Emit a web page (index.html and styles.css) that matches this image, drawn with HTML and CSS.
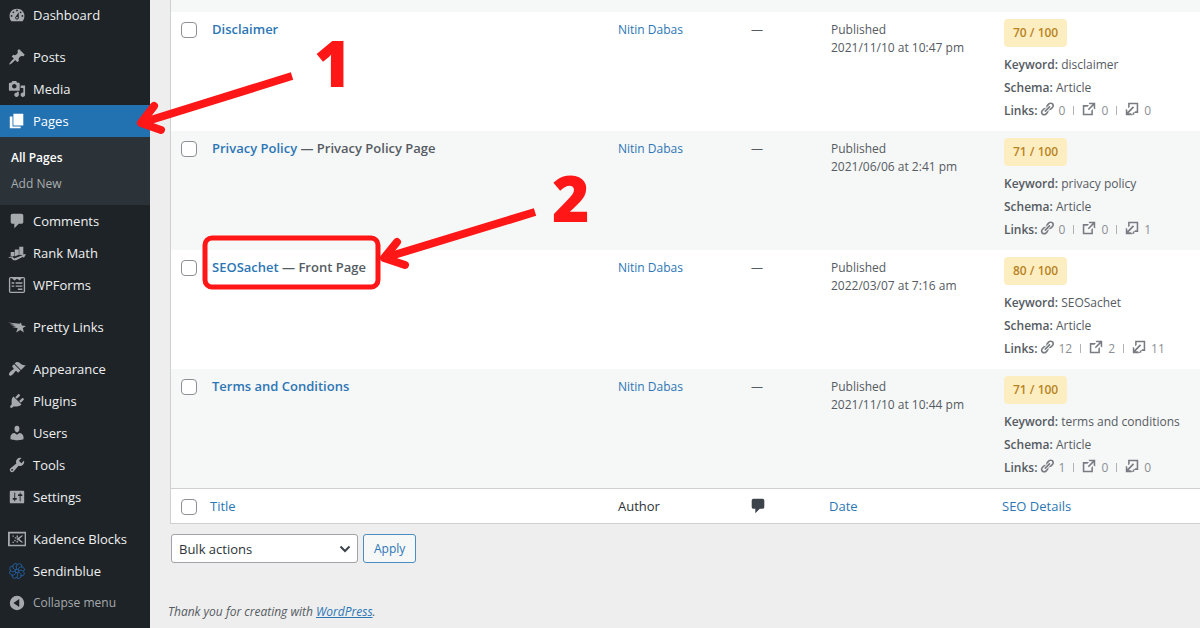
FILE: index.html
```html
<!DOCTYPE html>
<html lang="en">
<head>
<meta charset="utf-8">
<title>Pages</title>
<link rel="stylesheet" href="styles.css">
</head>
<body>
<svg class="sprite" aria-hidden="true">
  <symbol id="link" viewBox="1 1 18 18"><path d="M17.74 2.76c1.68 1.69 1.68 4.41 0 6.1l-1.53 1.52c-1.12 1.12-2.7 1.47-4.14 1.09l2.62-2.61.76-.77.76-.76c.84-.84.84-2.2 0-3.04-.84-.85-2.2-.85-3.04 0l-.77.76-3.38 3.38c-.37-1.44-.02-3.02 1.1-4.14l1.52-1.53c1.69-1.68 4.42-1.68 6.1 0zM8.59 13.43l5.34-5.34c.42-.42.42-1.1 0-1.52-.44-.43-1.13-.39-1.53 0l-5.33 5.34c-.42.42-.42 1.1 0 1.52.44.43 1.13.39 1.52 0zm-.76 2.29l4.14-4.15c.38 1.44.03 3.02-1.09 4.14l-1.52 1.53c-1.69 1.68-4.41 1.68-6.1 0-1.68-1.68-1.68-4.42 0-6.1l1.53-1.52c1.12-1.12 2.7-1.47 4.14-1.1l-4.14 4.15c-.85.84-.85 2.2 0 3.05.84.84 2.2.84 3.04 0z"/></symbol>
  <symbol id="external" viewBox="1 1 18 18"><path d="M9.500 2H18v8.500l-2-1V5.400l-6.200 6.200-1.400-1.400L14.600 4h-4zM13 16v-4l2-2v8H2V5h8L8 7H4v9z"/></symbol>
  <symbol id="incoming" viewBox="1 1 18 18"><path d="M5 2h13v13h-5.500l1.500-2h2V4H7v3.500L5 9zM2 10l2 1v2.800l7.200-7.200 1.500 1.500L5.600 15.500H9l1 2.500H2z"/><path d="M8.500 17.900L11 16v-1.500h2V17z"/></symbol>
  <symbol id="bubble" viewBox="0 0 20 20"><path d="M5 2h10c1.100 0 2 .9 2 2v7c0 1.100-.9 2-2 2h-3l-5 5v-5H5c-1.100 0-2-.9-2-2V4c0-1.100.9-2 2-2z"/></symbol>
</svg>
<div class="layout">
  <nav class="sidebar" aria-label="Main menu">
    <ul class="menu">
      <li><a href="#"><svg class="icon" viewBox="0 0 20 20"><path d="M3.760 17h12.480c1.340-1.630 2.010-3.820 2.010-6.030C18.260 6.020 14.550 3 10 3S1.740 6.020 1.740 11c0 2.210.68 4.370 2.020 6zM10 4c.55 0 1 .45 1 1s-.45 1-1 1-1-.45-1-1 .45-1 1-1zM6 6c.55 0 1 .45 1 1s-.45 1-1 1-1-.45-1-1 .45-1 1-1zM14 6c.55 0 1 .45 1 1s-.45 1-1 1-1-.45-1-1 .45-1 1-1zM8.630 11.550L12 7v6c0 1.100-.9 2-2 2s-2-.9-2-2c0-.57.24-1.080.63-1.450zM4 10c.55 0 1 .45 1 1s-.45 1-1 1-1-.45-1-1 .45-1 1-1zM16 10c.55 0 1 .45 1 1s-.45 1-1 1-1-.45-1-1 .45-1 1-1zM11 13c0-.55-.45-1-1-1s-1 .45-1 1 .45 1 1 1 1-.45 1-1z"/></svg>Dashboard</a></li>
      <li class="group"><a href="#"><svg class="icon" viewBox="0 0 20 20"><path d="M10.440 3.020l1.820-1.820 6.360 6.350-1.830 1.820c-1.050-.68-2.480-.57-3.410.36l-.75.75c-.92.93-1.040 2.350-.35 3.410l-1.830 1.820-2.410-2.410-2.800 2.790c-.42.42-3.380 2.710-3.800 2.290s1.860-3.390 2.280-3.810l2.790-2.790L4.100 9.360l1.830-1.820c1.050.69 2.480.57 3.400-.36l.75-.75c.93-.92 1.050-2.350.36-3.410z"/></svg>Posts</a></li>
      <li><a href="#"><svg class="icon" viewBox="0 0 20 20"><path d="M13 11V4c0-.55-.45-1-1-1h-1.670L9 1H5L3.670 3H2c-.55 0-1 .45-1 1v7c0 .55.45 1 1 1h10c.55 0 1-.45 1-1zM7 4.500c1.380 0 2.500 1.120 2.500 2.500S8.380 9.500 7 9.500 4.500 8.380 4.500 7 5.620 4.500 7 4.500zM14 6h5v10.500c0 1.380-1.120 2.500-2.500 2.500S14 17.880 14 16.500s1.120-2.500 2.500-2.500c.17 0 .34.02.5.05V9h-3V6zm-4 8.050V13h2v3.500c0 1.380-1.120 2.500-2.500 2.500S7 17.880 7 16.500 8.120 14 9.500 14c.17 0 .34.02.5.05z"/></svg>Media</a></li>
      <li class="current"><a href="#" aria-current="page"><svg class="icon" viewBox="0 0 20 20"><path d="M6 15V2h11v13H6zm-1 1h9v2H2V5h3v11z"/></svg>Pages</a>
        <ul class="submenu">
          <li><a class="active" href="#">All Pages</a></li>
          <li><a href="#">Add New</a></li>
        </ul>
      </li>
      <li><a href="#"><svg class="icon"><use href="#bubble"/></svg>Comments</a></li>
      <li><a href="#"><svg class="icon" viewBox="0 0 20 20"><path d="M3 9h4v4l-4 2zM7.500 6H12v6l-4.500 2zM12.500 3H17v8l-4.500 1.500zM0 15l4-1.500L7 16l9-3.500-.5-1.500 4.500.5-2.500 4-.8-1.200L9 18H6l-2.500-2.500z"/></svg>Rank Math</a></li>
      <li><a href="#"><svg class="icon" viewBox="0 0 20 20"><path d="M3 1h14a2 2 0 0 1 2 2v14a2 2 0 0 1-2 2H3a2 2 0 0 1-2-2V3a2 2 0 0 1 2-2zm-.5 1.500v15h15v-15h-2L13 5l-3-2-3 2-2.500-2.500zM4 7h3v1.500H4zM8.500 7H16v1.500H8.500zM4 10.500h3V12H4zM8.500 10.500H16V12H8.500zM11 14h5v1.500h-5z"/></svg>WPForms</a></li>
      <li class="group"><a href="#"><svg class="icon" viewBox="0 0 20 20"><path d="M0 5l13 1.500 1.500-1.500.8 3.200L20 9l-3.500 2.200 1 4.800-3.800-2.800L9 16l1.800-4.500-6-1.500 4-.8L2 7.500l5-.2z"/></svg>Pretty Links</a></li>
      <li class="group"><a href="#"><svg class="icon" viewBox="0 0 20 20"><path d="M14.480 11.060L7.410 3.990l1.500-1.500c.5-.56 2.300-.47 3.510.32 1.210.8 1.430 1.280 2.910 2.100 1.180.64 2.450 1.260 4.450.85zm-.71.71L6.700 4.700 4.930 6.470c-.39.39-.39 1.020 0 1.410l1.060 1.060c.39.39.39 1.030 0 1.420-.6.6-1.430 1.110-2.210 1.690-.35.26-.7.53-1.010.84C1.430 14.230.4 16.080 1.400 17.070c.99 1 2.840-.03 4.180-1.360.31-.31.58-.66.85-1.020.57-.78 1.080-1.610 1.690-2.210.39-.39 1.020-.39 1.410 0l1.060 1.060c.39.39 1.020.39 1.410 0z"/></svg>Appearance</a></li>
      <li><a href="#"><svg class="icon" viewBox="0 0 20 20"><path d="M13.110 4.360L9.870 7.600 8 5.730l3.240-3.240c.35-.34 1.050-.2 1.560.32.52.51.66 1.210.31 1.550zm-8 1.770l.91-1.120 9.010 9.010-1.190.84c-.71.71-2.630 1.160-3.820 1.160H6.140L4.900 17.260c-.59.59-1.540.59-2.120 0-.59-.58-.59-1.530 0-2.120l1.240-1.240v-3.880c0-1.130.4-3.190 1.090-3.890zm7.260 3.970l3.240-3.240c.34-.35 1.040-.21 1.550.31.52.51.66 1.210.31 1.550l-3.240 3.250z"/></svg>Plugins</a></li>
      <li><a href="#"><svg class="icon" viewBox="0 0 20 20"><path d="M10 9.250c-2.270 0-2.730-3.440-2.730-3.440C7 4.020 7.820 2 9.970 2c2.160 0 2.980 2.020 2.710 3.810 0 0-.41 3.440-2.680 3.440zm0 2.570L12.720 10c2.390 0 4.520 2.330 4.520 4.530v2.490s-3.650 1.130-7.240 1.130c-3.650 0-7.240-1.130-7.240-1.130v-2.490c0-2.250 1.940-4.480 4.470-4.480z"/></svg>Users</a></li>
      <li><a href="#"><svg class="icon" viewBox="0 0 20 20"><path d="M16.680 9.770c-1.340 1.340-3.300 1.670-4.950.99l-5.410 6.520c-.99.99-2.590.99-3.580 0s-.99-2.590 0-3.570l6.520-5.420c-.68-1.650-.35-3.610.99-4.950 1.280-1.280 3.120-1.620 4.720-1.060l-2.890 2.890 2.820 2.820 2.860-2.870c.53 1.580.18 3.390-1.080 4.650zM3.810 16.210c.4.39 1.040.39 1.430 0 .4-.4.4-1.040 0-1.430-.39-.4-1.030-.4-1.430 0-.39.39-.39 1.030 0 1.430z"/></svg>Tools</a></li>
      <li><a href="#"><svg class="icon" viewBox="0 0 20 20"><path d="M18 16V4c0-.55-.45-1-1-1H3c-.55 0-1 .45-1 1v12c0 .55.45 1 1 1h14c.55 0 1-.45 1-1zM8 11h1c.55 0 1 .45 1 1s-.45 1-1 1H8v1.500c0 .28-.22.5-.5.5s-.5-.22-.5-.5V13H6c-.55 0-1-.45-1-1s.45-1 1-1h1V5.500c0-.28.22-.5.5-.5s.5.22.5.5V11zm5-2h-1c-.55 0-1-.45-1-1s.45-1 1-1h1V5.500c0-.28.22-.5.5-.5s.5.22.5.5V7h1c.55 0 1 .45 1 1s-.45 1-1 1h-1v5.500c0 .28-.22.5-.5.5s-.5-.22-.5-.5V9z"/></svg>Settings</a></li>
      <li class="group"><a href="#"><svg class="icon" viewBox="0 0 20 20"><path d="M0 2h20v16H0zM2 4v12.500h16.500V4zM5 6h1.500v1.500H5zM7.500 8H9v1.500H7.500zM9.500 6H11v2.500H9.500zM9 10l2-1 4-3h2l-4.500 4 4.500 4h-2l-4-3zM7 11h1.500v1.500H7zM9.500 12H11v2H9.500zM5 13h1.500v1.500H5z"/></svg>Kadence Blocks</a></li>
      <li><a href="#"><svg class="icon icon-line" viewBox="0 0 20 20"><circle cx="10" cy="10" r="2"/><path d="M10 8C8 5 10 2 13 2c2 0 3 2 2 4M11.400 8.600C12 5 15.500 4.500 17.500 6.500c1.400 1.500.7 3.500-1 4.200M12 10c3-2 6 0 6 3 0 2-2 3-4 2M11.400 11.400c3.600.6 4.100 4.100 2.100 6.100-1.500 1.400-3.500.7-4.200-1M10 12c2 3 0 6-3 6-2 0-3-2-2-4M8.600 11.400C8 15 4.500 15.500 2.500 13.500c-1.400-1.500-.7-3.500 1-4.200M8 10c-3 2-6 0-6-3 0-2 2-3 4-2M8.600 8.600C5 8 4.500 4.500 6.500 2.500c1.500-1.400 3.500-.7 4.200 1"/></svg>Sendinblue</a></li>
      <li><button class="collapse" type="button"><svg class="icon" viewBox="0 0 20 20"><path d="M10 2a8 8 0 1 1 0 16 8 8 0 0 1 0-16zm2.500 3.500L6 10l6.500 4.500z"/></svg>Collapse menu</button></li>
    </ul>
  </nav>
  <main class="content">
    <table class="pages">
      <colgroup><col class="c-check"><col><col class="c-author"><col class="c-comments"><col class="c-date"><col class="c-seo"></colgroup>
      <tbody>
        <tr class="tail"><td colspan="6"></td></tr>
        <tr>
          <td class="check"><input type="checkbox" aria-label="Select Disclaimer"></td>
          <td class="title"><a href="#">Disclaimer</a></td>
          <td><a href="#">Nitin Dabas</a></td><td>—</td>
          <td>Published<br>2021/11/10 at 10:47 pm</td>
          <td class="seo"><span class="score">70 / 100</span><div><b>Keyword:</b> disclaimer</div><div><b>Schema:</b> Article</div>
            <div class="links"><b>Links:</b><svg><use href="#link"/></svg><span>0</span><i></i><svg><use href="#external"/></svg><span>0</span><i></i><svg><use href="#incoming"/></svg><span>0</span></div></td>
        </tr>
        <tr class="alt">
          <td class="check"><input type="checkbox" aria-label="Select Privacy Policy"></td>
          <td class="title"><a href="#">Privacy Policy</a> — Privacy Policy Page</td>
          <td><a href="#">Nitin Dabas</a></td><td>—</td>
          <td>Published<br>2021/06/06 at 2:41 pm</td>
          <td class="seo"><span class="score">71 / 100</span><div><b>Keyword:</b> privacy policy</div><div><b>Schema:</b> Article</div>
            <div class="links"><b>Links:</b><svg><use href="#link"/></svg><span>0</span><i></i><svg><use href="#external"/></svg><span>0</span><i></i><svg><use href="#incoming"/></svg><span>1</span></div></td>
        </tr>
        <tr>
          <td class="check"><input type="checkbox" aria-label="Select SEOSachet"></td>
          <td class="title"><a href="#">SEOSachet</a> — Front Page</td>
          <td><a href="#">Nitin Dabas</a></td><td>—</td>
          <td>Published<br>2022/03/07 at 7:16 am</td>
          <td class="seo"><span class="score">80 / 100</span><div><b>Keyword:</b> SEOSachet</div><div><b>Schema:</b> Article</div>
            <div class="links"><b>Links:</b><svg><use href="#link"/></svg><span>12</span><i></i><svg><use href="#external"/></svg><span>2</span><i></i><svg><use href="#incoming"/></svg><span>11</span></div></td>
        </tr>
        <tr class="alt">
          <td class="check"><input type="checkbox" aria-label="Select Terms and Conditions"></td>
          <td class="title"><a href="#">Terms and Conditions</a></td>
          <td><a href="#">Nitin Dabas</a></td><td>—</td>
          <td>Published<br>2021/11/10 at 10:44 pm</td>
          <td class="seo"><span class="score">71 / 100</span><div><b>Keyword:</b> terms and conditions</div><div><b>Schema:</b> Article</div>
            <div class="links"><b>Links:</b><svg><use href="#link"/></svg><span>1</span><i></i><svg><use href="#external"/></svg><span>0</span><i></i><svg><use href="#incoming"/></svg><span>0</span></div></td>
        </tr>
      </tbody>
      <tfoot>
        <tr>
          <td class="check"><input type="checkbox" aria-label="Select all"></td>
          <th><a href="#">Title</a></th><th class="author">Author</th>
          <th class="comments"><svg role="img" aria-label="Comments"><use href="#bubble"/></svg></th>
          <th><a href="#">Date</a></th><th><a href="#">SEO Details</a></th>
        </tr>
      </tfoot>
    </table>
    <form class="bulk">
      <span class="select"><select aria-label="Bulk actions"><option>Bulk actions</option></select><svg viewBox="0 0 12 8"><path d="M1.500 1.500L6 6l4.500-4.500"/></svg></span>
      <button type="button">Apply</button>
    </form>
    <footer class="thanks">Thank you for creating with <a href="#">WordPress</a>.</footer>
  </main>
</div>
<svg class="notes" width="600" height="300" viewBox="0 0 600 300">
  <g class="stroke">
    <path d="M292 76L141 123"/><path class="head" d="M154 106L141 123L161 130"/>
    <path d="M535 212L384 258"/><path class="head" d="M397 242L384 258L405 265"/>
    <rect class="frame" x="205" y="238" width="173" height="49" rx="7"/>
  </g>
  <text x="314" y="87">1</text>
  <text x="552" y="222">2</text>
</svg>
</body>
</html>
```

FILE: styles.css
```css
* { box-sizing: border-box; }
body {
  margin: 0;
  background: #eee;
  color: #555b62;
  font: 12px/18px "Open Sans", "Noto Sans", sans-serif;
  overflow: hidden;
}
a { color: #2c76b5; text-decoration: none; }
ul { margin: 0; padding: 0; list-style: none; }
.sprite { display: none; }
.layout { display: flex; min-height: 100vh; }

.sidebar { flex: none; width: 150px; background: #1d2327; }
.menu { margin-top: -1px; font-size: 13px; }
.menu a, .collapse {
  display: flex;
  align-items: center;
  gap: 7px;
  width: 100%;
  height: 32px;
  padding: 0 8px;
  color: #f0f0f1;
  white-space: nowrap;
}
.icon { flex: none; width: 18px; height: 18px; fill: #a7aaad; fill-rule: evenodd; }
.icon-line { fill: none; stroke: #2463a8; stroke-width: 1; }
.group { margin-top: 10px; }
.current > a { background: #2271b1; color: #fff; }
.current .icon { fill: #fff; }
.submenu { padding: 8px 0; background: #2c3338; font-size: 12px; }
.submenu a { height: 26px; padding: 0 11px; color: #a9adb1; }
.submenu .active { color: #fff; font-weight: 600; }
.collapse { border: 0; background: none; color: #a7aaad; font: inherit; font-size: 12px; }

.content { flex: 1; min-width: 0; padding-left: 20px; }
.pages {
  width: 100%;
  table-layout: fixed;
  border-collapse: separate;
  border-spacing: 0;
  background: #fff;
  border: 1px solid #cfd0d2;
  border-width: 0 0 1px 1px;
}
.c-check { width: 31px; }
.c-author { width: 133px; }
.c-comments { width: 80px; }
.c-date { width: 173px; }
.c-seo { width: 206px; }
.pages td { padding: 9px 10px; vertical-align: top; }
.pages .tail td { height: 12px; padding: 0; background: #f6f7f7; }
.alt { background: #f6f7f7; }
.pages .title { padding-top: 8px; font-size: 13px; font-weight: 600; }
.pages .check { padding: 10px 0 0 10px; }
input[type="checkbox"] {
  appearance: none;
  display: block;
  width: 16px;
  height: 16px;
  margin: 0;
  border: 1px solid #8c8f94;
  border-radius: 4px;
  background: #fff;
}
.pages .seo { padding: 7px 10px 9px; line-height: 23px; }
.seo b { font-weight: 600; }
.score {
  display: block;
  width: max-content;
  margin-bottom: 6px;
  padding: 0 9px;
  border-radius: 4px;
  background: #fdeec2;
  color: #b98324;
  font-weight: 600;
  line-height: 28px;
}
.links { display: flex; align-items: center; color: #8c8f94; }
.links b { color: #555b62; margin-right: 2px; }
.links svg { width: 14px; height: 14px; margin: 0 5px 4px 0; fill: #787c82; }
.links i { width: 1px; height: 9px; margin: 0 8px; background: #b0b3b6; }
tfoot th, tfoot td { border-top: 1px solid #cfd0d2; }
.pages th { padding: 8px; font-size: 13px; font-weight: 400; text-align: left; }
.pages .author { padding-left: 10px; color: #2c3338; }
.comments svg { display: block; width: 18px; height: 18px; fill: #3c434a; }

.bulk { display: flex; gap: 5px; margin-top: 10px; padding-left: 1px; }
.select { position: relative; width: 187px; }
.select svg { position: absolute; right: 7px; top: 11px; width: 12px; height: 8px; fill: none; stroke: #3c434a; stroke-width: 2; pointer-events: none; }
select, .bulk button { height: 29px; border-radius: 3px; font: inherit; }
select { appearance: none; width: 100%; padding: 0 7px; border: 1px solid #a0a3a7; background: #fff; color: #2c3338; font-size: 13px; }
.bulk button { padding: 0 10px; border: 1px solid #4a8dc2; background: #f6f7f7; color: #2c76b5; }
.thanks { margin: 40px 0 0 -2px; font-style: italic; }
.thanks a { text-decoration: underline; }

.notes { position: absolute; left: 0; top: 0; pointer-events: none; fill: #ff1616; }
.stroke { fill: none; stroke: #ff1616; stroke-width: 8; }
.head { stroke-linecap: round; stroke-linejoin: round; }
.frame { stroke-width: 5; }
.notes text { font: 800 64px "Open Sans", sans-serif; }
```
